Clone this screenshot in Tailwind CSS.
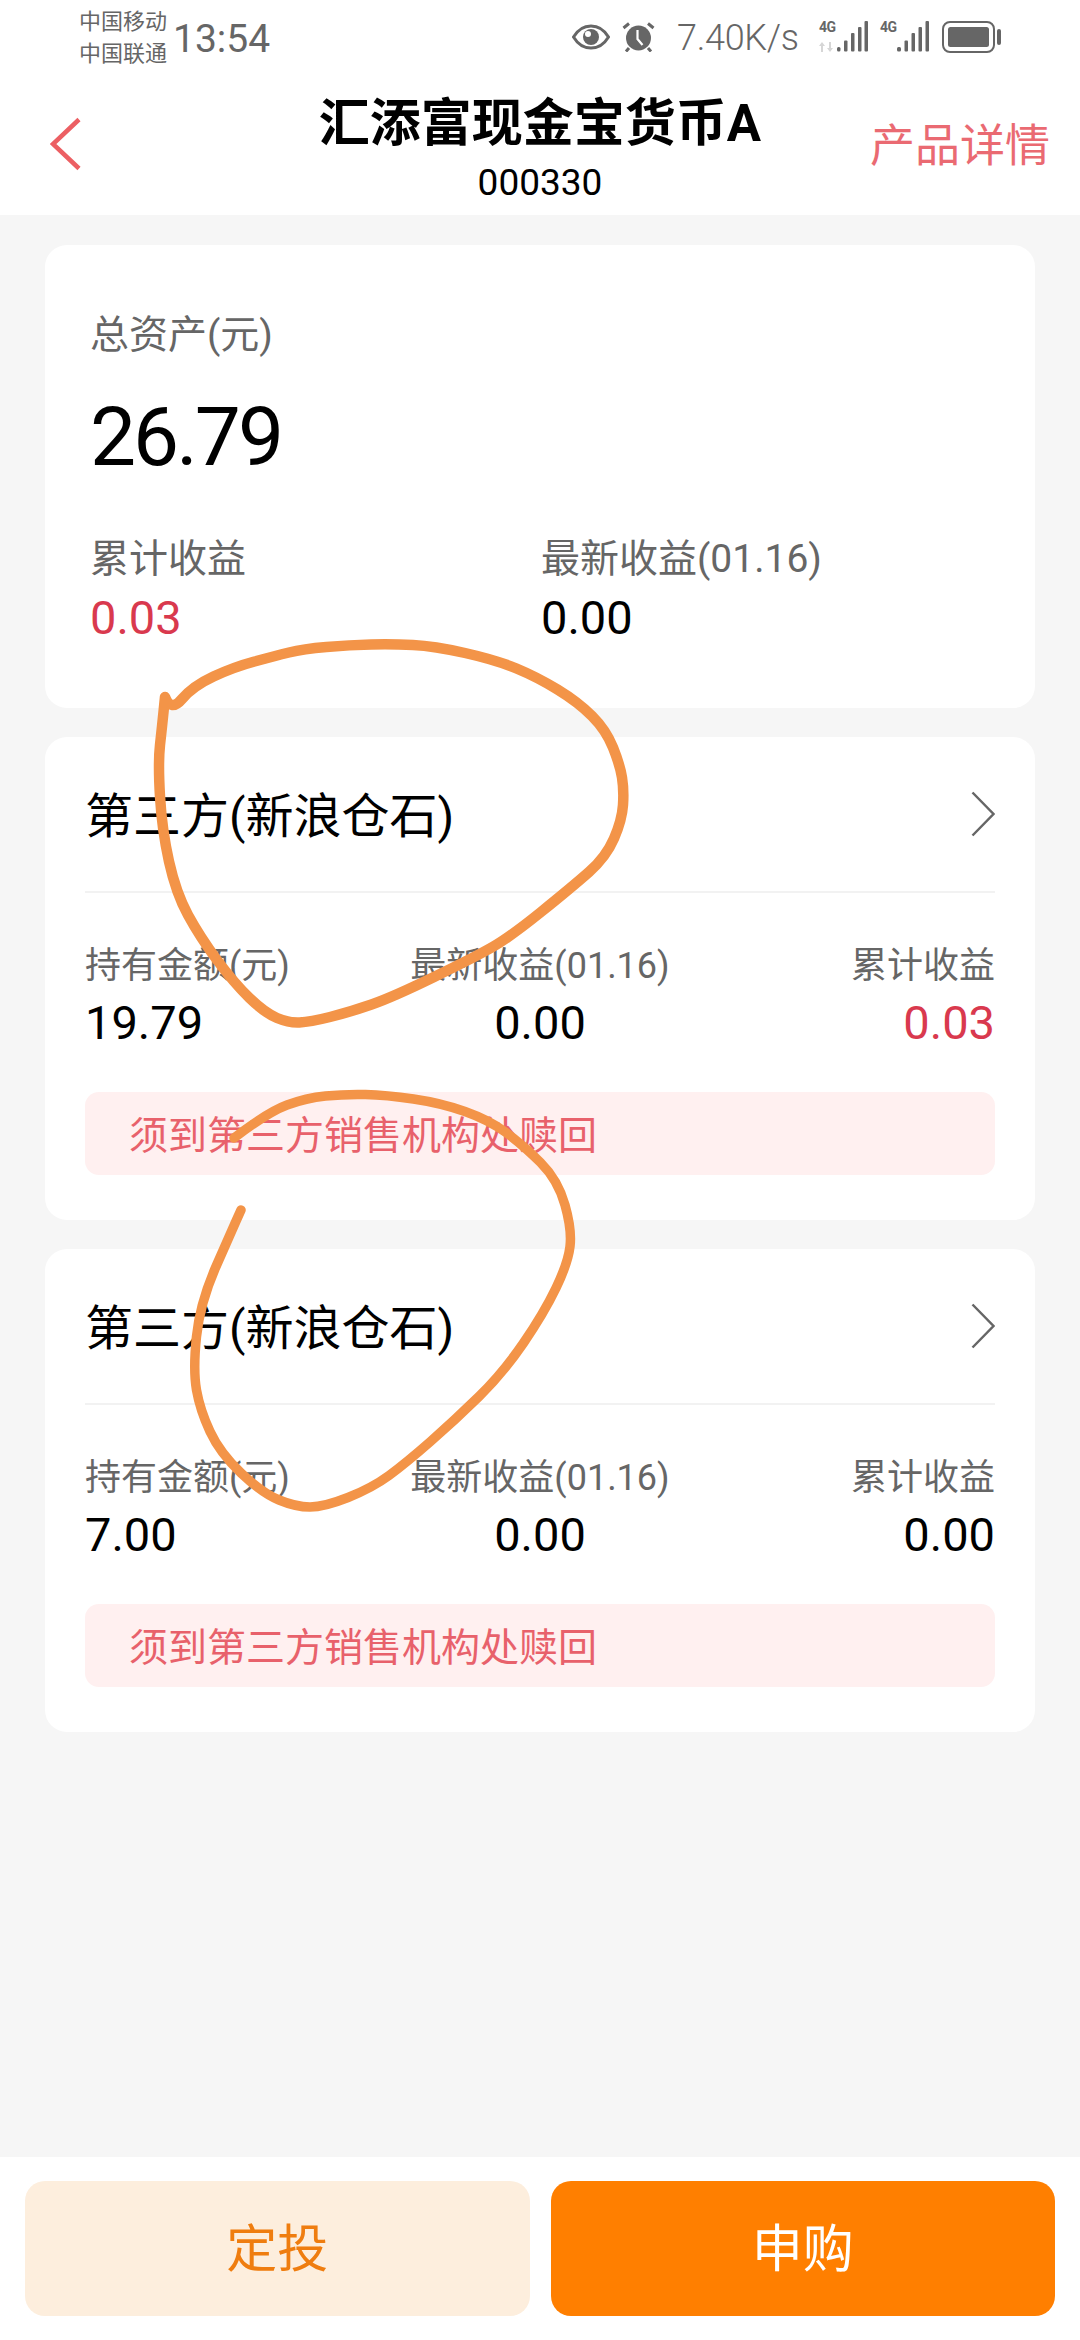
<!DOCTYPE html>
<html lang="zh-CN">
<head>
  <meta charset="UTF-8">
  <title>汇添富现金宝货币A</title>
  <meta name="viewport" content="width=device-width, initial-scale=1.0">
  <script src="https://cdn.jsdelivr.net/npm/@tailwindcss/browser@4"></script>
</head>
<body class="relative w-[1080px] h-[2340px] flex flex-col bg-[#f6f6f6] text-black overflow-hidden font-[family-name:Roboto,'Noto_Sans_CJK_SC',sans-serif]">

  <!-- status bar + title -->
  <header class="bg-white h-[215px] shrink-0">
    <div class="h-[76px] pl-[79px] pr-[79px] flex items-start text-[#666]">
      <div class="flex flex-col text-[22px] leading-[32px] pt-[6px] w-[94px]">
        <span>中国移动</span>
        <span>中国联通</span>
      </div>
      <span class="text-[39px] leading-[46px] mt-[16px]">13:54</span>

      <div class="ml-auto flex items-center h-[32px] mt-[21px]">
        <svg class="w-[38px] h-[26px] mr-[12px]" viewBox="0 0 38 26" fill="none">
          <path d="M1.5 13C6 5.5 12 2 19 2s13 3.500 17.500 11C32 20.500 26 24 19 24S6 20.500 1.500 13z" stroke="#666" stroke-width="3"/>
          <circle cx="19" cy="13" r="8" fill="#666"/>
          <circle cx="16" cy="10" r="3" fill="#fff"/>
        </svg>
        <svg class="w-[33px] h-[30px] mr-[22px]" viewBox="0 0 33 30" fill="none">
          <circle cx="16.500" cy="16" r="12.500" fill="#666"/>
          <path d="M15.500 8v9l5 6" stroke="#fff" stroke-width="2.200"/>
          <path d="M1.500 6L7 1.500M31.500 6L26 1.500M7 26l-3 3.500M26 26l3 3.500" stroke="#666" stroke-width="3"/>
        </svg>
        <span class="text-[36px] leading-[32px] font-light w-[120px] mr-[22px] mt-[2px] whitespace-nowrap tracking-[-0.3px]">7.40K/s</span>

        <!-- sim 1 -->
        <div class="w-[49px] h-[32px] flex mr-[12px]">
          <div class="w-[18px] flex flex-col">
            <span class="text-[14px] leading-[13px] font-bold tracking-[-0.5px]">4G</span>
            <svg class="w-[17px] h-[10px] mt-[8px]" viewBox="0 0 17 10" fill="#d6d6d6">
              <path d="M3 0l3 4H4v6H2V4H0zM10 0h2v6h2l-3 4-3-4h2z"/>
            </svg>
          </div>
          <svg class="w-[31px] h-[32px]" viewBox="0 0 31 32" fill="#666">
            <rect x="0" y="26" width="3.500" height="4.500" rx="1.500"/>
            <rect x="7" y="19.500" width="3.500" height="11" rx="1"/>
            <rect x="14" y="12" width="3.500" height="18.500" rx="1"/>
            <rect x="21" y="6" width="3.500" height="24.500" rx="1"/>
            <rect x="27.500" y="0" width="3.500" height="30.500" rx="1"/>
          </svg>
        </div>

        <!-- sim 2 -->
        <div class="w-[49px] h-[32px] flex mr-[13px]">
          <span class="w-[17px] text-[14px] leading-[13px] font-bold tracking-[-0.5px]">4G</span>
          <svg class="w-[32px] h-[32px]" viewBox="0 0 32 32" fill="#666">
            <rect x="0" y="26" width="4" height="4.500" rx="1.500"/>
            <rect x="7.500" y="19.500" width="3.500" height="11" rx="1"/>
            <rect x="14.500" y="12" width="3.500" height="18.500" rx="1"/>
            <rect x="21.500" y="6" width="3.500" height="24.500" rx="1"/>
            <rect x="28.500" y="0" width="3.500" height="30.500" rx="1"/>
          </svg>
        </div>

        <svg class="w-[59px] h-[32px]" viewBox="0 0 59 32" fill="none">
          <rect x="1" y="1" width="51" height="30" rx="7" stroke="#666" stroke-width="2"/>
          <rect x="6" y="6" width="41" height="20" rx="2.500" fill="#666"/>
          <rect x="55" y="8" width="4" height="16" rx="2" fill="#666"/>
        </svg>
      </div>
    </div>

    <div class="relative h-[139px]">
      <svg class="absolute left-[50px] top-[41px] w-[32px] h-[54px]" viewBox="0 0 32 54" fill="none">
        <path d="M29 2.500L3 27l26 24.500" stroke="#ec5f63" stroke-width="4.500"/>
      </svg>
      <div class="flex flex-col items-center">
        <h1 class="text-[51px] leading-[56px] mt-[20px] font-bold">汇添富现金宝货币A</h1>
        <span class="text-[37px] leading-[40px] mt-[11px]">000330</span>
      </div>
      <span class="absolute right-[30px] top-[46px] text-[45px] leading-[50px] text-[#ea6a72]">产品详情</span>
    </div>
  </header>

  <main class="flex-1 px-[45px] pt-[30px] flex flex-col gap-[29px]">
    <!-- total -->
    <section class="bg-white rounded-[22px] h-[463px] pl-[45px] pt-[66px]">
      <p class="text-[39px] leading-[48px] text-[#666]">总资产(元)</p>
      <p class="text-[82px] leading-[92px] mt-[32px] tracking-[-3px]">26.79</p>
      <div class="grid grid-cols-[451px_1fr] mt-[52px]">
        <div>
          <p class="text-[39px] leading-[48px] text-[#666]">累计收益</p>
          <p class="text-[47px] leading-[52px] mt-[9px] text-[#d9394e]">0.03</p>
        </div>
        <div>
          <p class="text-[39px] leading-[48px] text-[#666]">最新收益(01.16)</p>
          <p class="text-[47px] leading-[52px] mt-[9px]">0.00</p>
        </div>
      </div>
    </section>

    <!-- holding 1 -->
    <section class="bg-white rounded-[22px] h-[483px] px-[40px]">
      <div class="h-[156px] pt-[6px] flex items-center justify-between border-b-2 border-[#f2f2f2]">
        <span class="text-[48px] leading-[60px]">第三方(新浪仓石)</span>
        <svg class="w-[24px] h-[46px] -mt-[6px]" viewBox="0 0 24 46" fill="none">
          <path d="M1.500 1.500L22.500 23 1.500 44.500" stroke="#666" stroke-width="2.500"/>
        </svg>
      </div>
      <div class="grid grid-cols-3 mt-[49px]">
        <div>
          <p class="text-[36px] leading-[48px] text-[#666] whitespace-nowrap">持有金额(元)</p>
          <p class="text-[47px] leading-[52px] mt-[7px]">19.79</p>
        </div>
        <div class="text-center">
          <p class="text-[36px] leading-[48px] text-[#666] whitespace-nowrap">最新收益(01.16)</p>
          <p class="text-[47px] leading-[52px] mt-[7px]">0.00</p>
        </div>
        <div class="text-right">
          <p class="text-[36px] leading-[48px] text-[#666]">累计收益</p>
          <p class="text-[47px] leading-[52px] mt-[7px] text-[#d9394e]">0.03</p>
        </div>
      </div>
      <div class="h-[83px] mt-[43px] rounded-[14px] bg-[#fff0f0] pl-[44px] pt-[5px] flex items-center text-[39px] text-[#e8616b]">须到第三方销售机构处赎回</div>
    </section>

    <!-- holding 2 -->
    <section class="bg-white rounded-[22px] h-[483px] px-[40px]">
      <div class="h-[156px] pt-[6px] flex items-center justify-between border-b-2 border-[#f2f2f2]">
        <span class="text-[48px] leading-[60px]">第三方(新浪仓石)</span>
        <svg class="w-[24px] h-[46px] -mt-[6px]" viewBox="0 0 24 46" fill="none">
          <path d="M1.500 1.500L22.500 23 1.500 44.500" stroke="#666" stroke-width="2.500"/>
        </svg>
      </div>
      <div class="grid grid-cols-3 mt-[49px]">
        <div>
          <p class="text-[36px] leading-[48px] text-[#666] whitespace-nowrap">持有金额(元)</p>
          <p class="text-[47px] leading-[52px] mt-[7px]">7.00</p>
        </div>
        <div class="text-center">
          <p class="text-[36px] leading-[48px] text-[#666] whitespace-nowrap">最新收益(01.16)</p>
          <p class="text-[47px] leading-[52px] mt-[7px]">0.00</p>
        </div>
        <div class="text-right">
          <p class="text-[36px] leading-[48px] text-[#666]">累计收益</p>
          <p class="text-[47px] leading-[52px] mt-[7px]">0.00</p>
        </div>
      </div>
      <div class="h-[83px] mt-[43px] rounded-[14px] bg-[#fff0f0] pl-[44px] pt-[5px] flex items-center text-[39px] text-[#e8616b]">须到第三方销售机构处赎回</div>
    </section>
  </main>

  <footer class="bg-white h-[183px] shrink-0 px-[25px] pt-[24px] flex gap-[21px]">
    <button class="flex-1 h-[135px] pt-[4px] rounded-[20px] bg-[#fdeedd] text-[#ef7d0f] text-[51px]">定投</button>
    <button class="flex-1 h-[135px] pt-[4px] rounded-[20px] bg-[#ff7f00] text-white text-[51px]">申购</button>
  </footer>

  <!-- hand drawn circles on top of the screenshot -->
  <svg class="absolute left-0 top-0 w-[1080px] h-[2340px] pointer-events-none" viewBox="0 0 1080 2340" fill="none" stroke="#f39448" stroke-linecap="round" stroke-linejoin="round">
    <path id="loop1" stroke-width="10.500"/>
    <path id="loop2" stroke-width="9.500"/>
  </svg>

  <script>
    const loops = {
      loop1: [[165,697],[171,712],[193,686],[234,667],[275,656],[303,649],[350,645],[392,644],[434,646],[496,660],[537,677],[578,702],[606,730],[620,765],[624,790],[622,820],[606,857],[572,887],[510,937],[475,957],[393,997],[350,1012],[310,1022],[289,1023],[265,1013],[234,983],[200,937],[176,893],[162,830],[158,763],[162,727],[165,697]],
      loop2: [[234,1138],[268,1112],[306,1098],[345,1094],[386,1095],[441,1103],[489,1120],[523,1145],[558,1180],[572,1230],[568,1263],[544,1313],[503,1373],[455,1420],[406,1463],[372,1488],[324,1507],[296,1507],[262,1493],[220,1453],[200,1410],[193,1370],[200,1303],[232,1230],[241,1210]]
    };

    // smooth the traced points with midpoint quadratics
    for (const id in loops) {
      const pts = loops[id];
      let d = `M${pts[0][0]} ${pts[0][1]}`;
      for (let i = 1; i < pts.length - 1; i++) {
        const mx = (pts[i][0] + pts[i + 1][0]) / 2;
        const my = (pts[i][1] + pts[i + 1][1]) / 2;
        d += `Q${pts[i][0]} ${pts[i][1]} ${mx} ${my}`;
      }
      const last = pts[pts.length - 1];
      d += `L${last[0]} ${last[1]}`;
      document.getElementById(id).setAttribute("d", d);
    }
  </script>
</body>
</html>
